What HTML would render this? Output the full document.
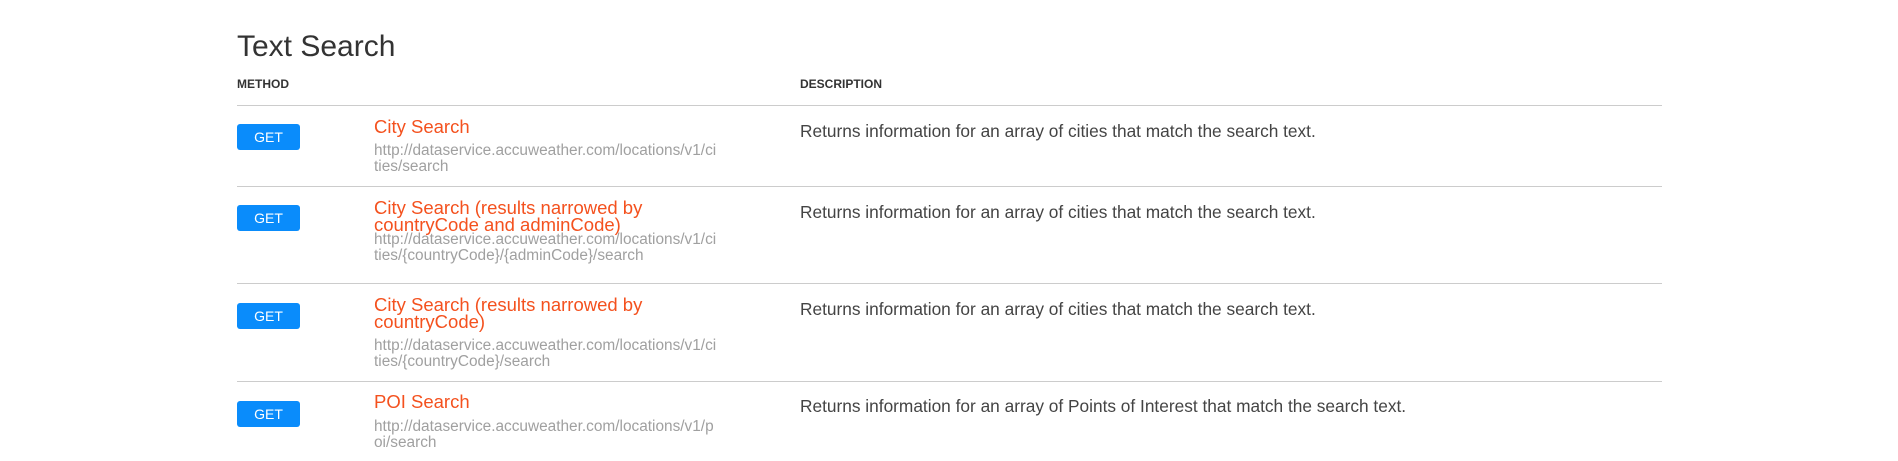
<!DOCTYPE html>
<html><head><style>
body{margin:0;width:1898px;height:461px;background:#fff;font-family:"Liberation Sans",Arial,sans-serif;position:relative;overflow:hidden}
.a{position:absolute;white-space:nowrap}
h1{position:absolute;left:237px;top:32px;margin:0;font-size:30px;line-height:30px;font-weight:normal;color:#333}
.hd{font-size:12px;line-height:14px;font-weight:bold;color:#333;top:77px}
.ln{position:absolute;left:237px;width:1425px;height:1px;background:#ccc}
.btn{position:absolute;left:237px;width:63px;height:26px;background:#0a8cfb;border-radius:3px;color:#fff;font-size:14px;text-align:center;line-height:26px}
.t{left:374px;font-size:18.5px;line-height:17px;color:#f4511e}
.u{left:374px;font-size:15.4px;line-height:16px;color:#a0a0a0}
.d{left:800px;font-size:17.3px;line-height:18px;color:#444}
</style></head><body>
<h1>Text Search</h1>
<div class="a hd" style="left:237px">METHOD</div>
<div class="a hd" style="left:800px">DESCRIPTION</div>
<div class="ln" style="top:105px"></div>
<div class="ln" style="top:186px"></div>
<div class="ln" style="top:283px"></div>
<div class="ln" style="top:381px"></div>

<div class="btn" style="top:124px">GET</div>
<div class="a t" style="top:118px">City Search</div>
<div class="a u" style="top:143px">http://dataservice.accuweather.com/locations/v1/ci<br>ties/search</div>
<div class="a d" style="top:122px">Returns information for an array of cities that match the search text.</div>

<div class="btn" style="top:205px">GET</div>
<div class="a t" style="top:199px">City Search (results narrowed by<br>countryCode and adminCode)</div>
<div class="a u" style="top:232px">http://dataservice.accuweather.com/locations/v1/ci<br>ties/{countryCode}/{adminCode}/search</div>
<div class="a d" style="top:203px">Returns information for an array of cities that match the search text.</div>

<div class="btn" style="top:303px">GET</div>
<div class="a t" style="top:296px">City Search (results narrowed by<br>countryCode)</div>
<div class="a u" style="top:338px">http://dataservice.accuweather.com/locations/v1/ci<br>ties/{countryCode}/search</div>
<div class="a d" style="top:300px">Returns information for an array of cities that match the search text.</div>

<div class="btn" style="top:401px">GET</div>
<div class="a t" style="top:393px">POI Search</div>
<div class="a u" style="top:419px">http://dataservice.accuweather.com/locations/v1/p<br>oi/search</div>
<div class="a d" style="top:397px">Returns information for an array of Points of Interest that match the search text.</div>
</body></html>
